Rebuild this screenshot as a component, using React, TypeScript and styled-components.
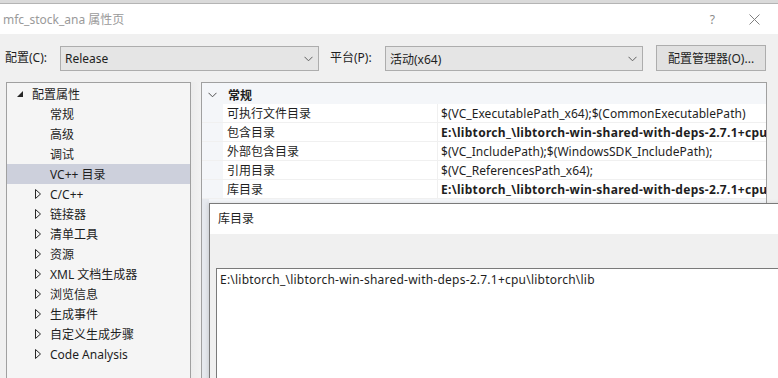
import React from 'react';
import styled, { createGlobalStyle } from 'styled-components';

const GlobalStyle = createGlobalStyle`
  html, body {
    margin: 0;
    padding: 0;
    background: #f0f0f0;
  }
  * {
    box-sizing: border-box;
  }
`;

const FONT = `"Noto Sans", "Noto Sans CJK SC", sans-serif`;

const TREE_ITEMS = [
  { label: '常规', expander: false },
  { label: '高级', expander: false },
  { label: '调试', expander: false },
  { label: 'VC++ 目录', expander: false, selected: true },
  { label: 'C/C++', expander: true },
  { label: '链接器', expander: true },
  { label: '清单工具', expander: true },
  { label: '资源', expander: true },
  { label: 'XML 文档生成器', expander: true },
  { label: '浏览信息', expander: true },
  { label: '生成事件', expander: true },
  { label: '自定义生成步骤', expander: true },
  { label: 'Code Analysis', expander: true },
];

const LIB_PATH = 'E:\\libtorch_\\libtorch-win-shared-with-deps-2.7.1+cpu';

const PROPS = [
  { name: '可执行文件目录', value: '$(VC_ExecutablePath_x64);$(CommonExecutablePath)' },
  { name: '包含目录', value: LIB_PATH, bold: true },
  { name: '外部包含目录', value: '$(VC_IncludePath);$(WindowsSDK_IncludePath);' },
  { name: '引用目录', value: '$(VC_ReferencesPath_x64);' },
  { name: '库目录', value: LIB_PATH, bold: true },
];

const Chevron = ({ color = '#606060' }: { color?: string }) => (
  <svg width="9" height="6" viewBox="0 0 9 6">
    <polyline points="0.5,0.8 4.5,4.8 8.5,0.8" fill="none" stroke={color} strokeWidth="1" />
  </svg>
);

const App = () => {
  return (
    <Window>
      <GlobalStyle />
      <TopStrip />
      <TitleBar>
        <TitleText>mfc_stock_ana 属性页</TitleText>
        <TitleButtons>
          <HelpGlyph>?</HelpGlyph>
          <svg width="11" height="11" viewBox="0 0 11 11">
            <line x1="0.5" y1="0.5" x2="10.5" y2="10.5" stroke="#808080" strokeWidth="1" />
            <line x1="10.5" y1="0.5" x2="0.5" y2="10.5" stroke="#808080" strokeWidth="1" />
          </svg>
        </TitleButtons>
      </TitleBar>

      <ConfigRow>
        <FieldLabel>配置(C):</FieldLabel>
        <Combo width={259}>
          <span>Release</span>
          <Chevron />
        </Combo>
        <FieldLabel>平台(P):</FieldLabel>
        <Combo width={258}>
          <span>活动(x64)</span>
          <Chevron />
        </Combo>
        <ManagerButton>配置管理器(O)...</ManagerButton>
      </ConfigRow>

      <Main>
        <Tree>
          <TreeRow depth={0}>
            <ExpanderSlot>
              <svg width="6" height="6" viewBox="0 0 6 6">
                <polygon points="6,0 6,6 0,6" fill="#262626" />
              </svg>
            </ExpanderSlot>
            配置属性
          </TreeRow>
          {TREE_ITEMS.map((item) => (
            <TreeRow key={item.label} depth={1} selected={item.selected}>
              <ExpanderSlot>
                {item.expander && (
                  <svg width="6" height="10" viewBox="0 0 6 10">
                    <polygon points="0.5,0.5 5.5,5 0.5,9.5" fill="none" stroke="#262626" strokeWidth="1" />
                  </svg>
                )}
              </ExpanderSlot>
              {item.label}
            </TreeRow>
          ))}
        </Tree>

        <Splitter />

        <Grid>
          <CategoryRow>
            <CategoryToggle>
              <Chevron color="#505050" />
            </CategoryToggle>
            <CategoryName>常规</CategoryName>
          </CategoryRow>
          {PROPS.map((p) => (
            <PropRow key={p.name}>
              <Margin />
              <NameCell>{p.name}</NameCell>
              <ValueCell bold={p.bold}>{p.value}</ValueCell>
            </PropRow>
          ))}
          <GridRest />
        </Grid>
      </Main>

      <Dialog>
        <DialogTitle>库目录</DialogTitle>
        <DialogToolbar />
        <DialogBody>
          <TextArea>{LIB_PATH}\libtorch\lib</TextArea>
        </DialogBody>
      </Dialog>
    </Window>
  );
};

const Window = styled.div`
  position: relative;
  width: 778px;
  height: 378px;
  overflow: hidden;
  background: #f0f0f0;
  font-family: ${FONT};
  font-size: 12px;
  color: #1e1e1e;
  display: flex;
  flex-direction: column;
`;

const TopStrip = styled.div`
  height: 4px;
  flex-shrink: 0;
  background: #dadada;
  border-bottom: 1px solid #b4b4b4;
`;

const TitleBar = styled.div`
  height: 30px;
  flex-shrink: 0;
  background: #ffffff;
  display: flex;
  align-items: center;
  justify-content: space-between;
  padding: 0 18px 0 3px;
`;

const TitleText = styled.span`
  color: #9a9a9a;
  font-size: 12px;
`;

const TitleButtons = styled.div`
  display: flex;
  align-items: center;
  gap: 34px;
`;

const HelpGlyph = styled.span`
  color: #8a8a8a;
  font-size: 12px;
`;

const ConfigRow = styled.div`
  height: 48px;
  flex-shrink: 0;
  display: flex;
  align-items: flex-start;
  padding: 11px 0 0 5px;
`;

const FieldLabel = styled.span`
  width: 55px;
  flex-shrink: 0;
  height: 25px;
  line-height: 25px;
  white-space: nowrap;
`;

const Combo = styled.div<{ width: number }>`
  width: ${(p) => p.width}px;
  flex-shrink: 0;
  height: 25px;
  margin-top: 1px;
  margin-right: 11px;
  background: #e5e5e5;
  border: 1px solid #adadad;
  display: flex;
  align-items: center;
  justify-content: space-between;
  padding: 0 5px 0 4px;
`;

const ManagerButton = styled.div`
  width: 110px;
  flex-shrink: 0;
  height: 26px;
  margin-left: 2px;
  background: #e1e1e1;
  border: 1px solid #adadad;
  display: flex;
  align-items: center;
  justify-content: center;
  white-space: nowrap;
`;

const Main = styled.div`
  flex: 1;
  display: flex;
  padding-left: 6px;
  padding-right: 11px;
  min-height: 0;
`;

const Tree = styled.div`
  width: 185px;
  background: #f5f5f5;
  border: 1px solid #a0a0a0;
  border-bottom: none;
  padding-top: 1px;
`;

const TreeRow = styled.div<{ depth: number; selected?: boolean }>`
  height: 20px;
  display: flex;
  align-items: center;
  padding-left: ${(p) => (p.depth === 0 ? 6 : 24)}px;
  background: ${(p) => (p.selected ? '#cdd0dc' : 'transparent')};
  white-space: nowrap;
`;

const ExpanderSlot = styled.span`
  width: 14px;
  height: 20px;
  margin-right: 5px;
  display: flex;
  align-items: center;
  justify-content: center;
`;

const Splitter = styled.div`
  width: 10px;
  background: linear-gradient(to right, #ececec, #f2f2f2);
`;

const Grid = styled.div`
  flex: 1;
  display: flex;
  flex-direction: column;
  border: 1px solid #a0a0a0;
  border-bottom: none;
  background: #ffffff;
  min-width: 0;
`;

const CategoryRow = styled.div`
  height: 21px;
  flex-shrink: 0;
  display: flex;
  align-items: center;
  background: #f4f6f9;
  padding-top: 2px;
`;

const CategoryToggle = styled.span`
  width: 21px;
  display: flex;
  justify-content: center;
`;

const CategoryName = styled.span`
  font-weight: bold;
  padding-left: 5px;
`;

const PropRow = styled.div`
  height: 19px;
  flex-shrink: 0;
  display: flex;
  border-bottom: 1px solid #f0f0f0;
`;

const Margin = styled.div`
  width: 21px;
  flex-shrink: 0;
  background: #f4f6f9;
`;

const NameCell = styled.div`
  width: 215px;
  flex-shrink: 0;
  padding: 2px 0 0 4px;
  line-height: 16px;
  border-right: 1px solid #f0f0f0;
  white-space: nowrap;
`;

const ValueCell = styled.div<{ bold?: boolean }>`
  flex: 1;
  padding: 2px 0 0 3px;
  line-height: 16px;
  white-space: nowrap;
  overflow: hidden;
  font-weight: ${(p) => (p.bold ? 'bold' : 'normal')};
  letter-spacing: ${(p) => (p.bold ? '0.3px' : '0.05px')};
`;

const GridRest = styled.div`
  flex: 1;
  background: linear-gradient(to right, #e6e9ee 0, #e6e9ee 7px, #f4f6f9 7px);
`;

const Dialog = styled.div`
  position: absolute;
  left: 209px;
  top: 203px;
  right: -20px;
  bottom: -20px;
  background: #f0f0f0;
  border: 1px solid #7a7a7a;
  box-shadow: -1px 0 4px rgba(0, 0, 0, 0.12);
  display: flex;
  flex-direction: column;
`;

const DialogTitle = styled.div`
  height: 30px;
  flex-shrink: 0;
  background: #ffffff;
  padding-left: 8px;
  line-height: 29px;
`;

const DialogToolbar = styled.div`
  height: 34px;
  flex-shrink: 0;
`;

const DialogBody = styled.div`
  flex: 1;
  padding-left: 6px;
`;

const TextArea = styled.div`
  height: 100%;
  background: #ffffff;
  border: 1px solid #7a7a7a;
  padding: 2px 3px;
  line-height: 18px;
  white-space: nowrap;
  letter-spacing: 0.23px;
`;

export default App;
